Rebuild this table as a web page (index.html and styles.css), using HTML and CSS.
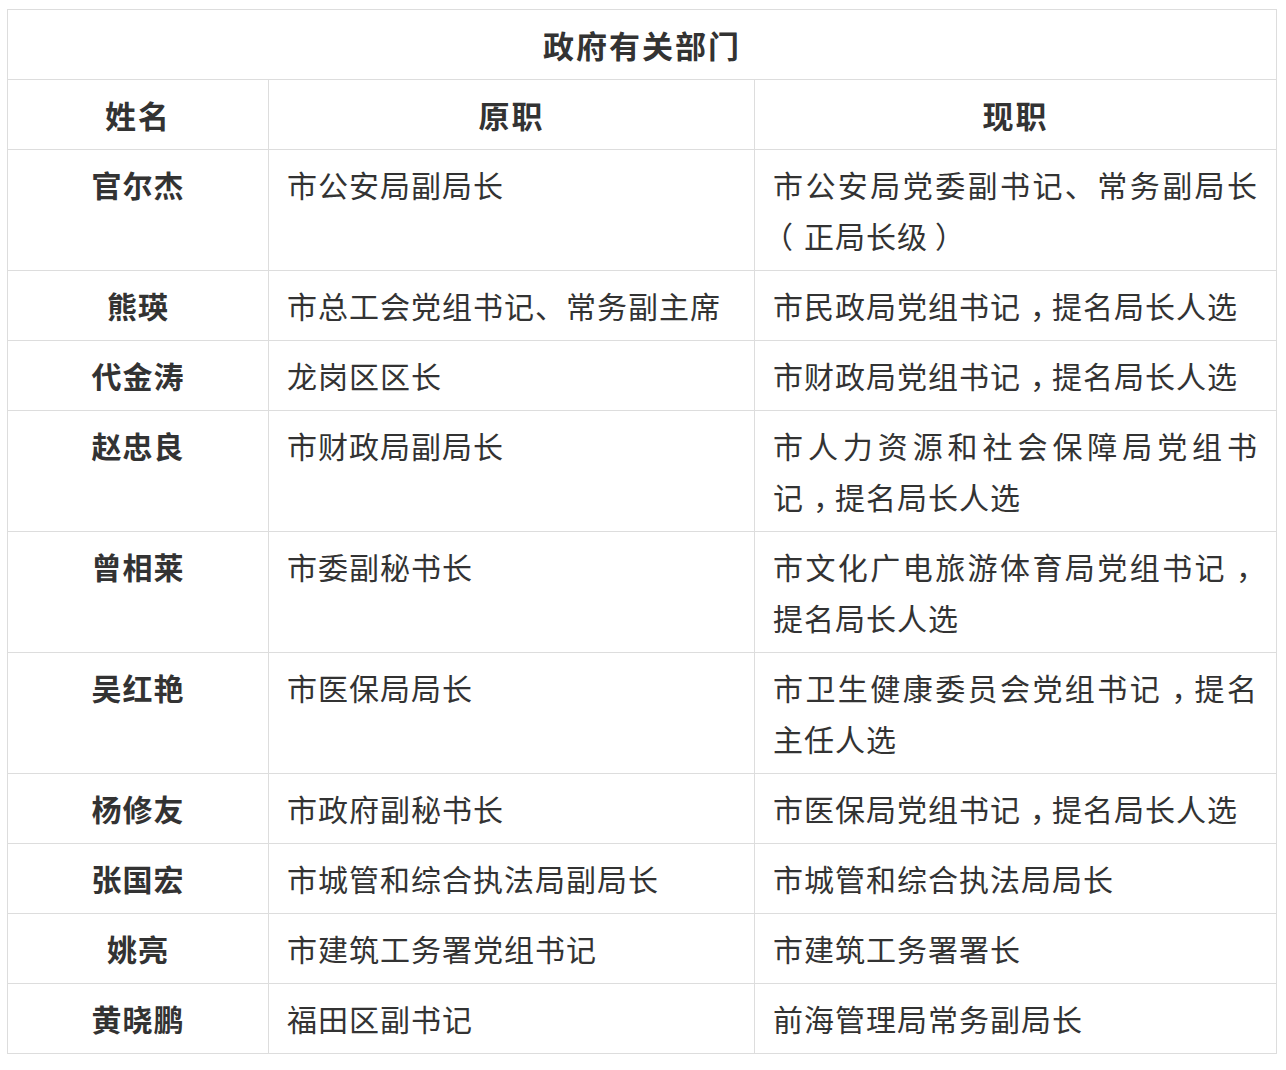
FILE: index.html
```html
<!DOCTYPE html>
<html lang="zh-CN">
<head>
<meta charset="utf-8">
<title>政府有关部门</title>
<link rel="stylesheet" href="styles.css">
</head>
<body>
<div class="wrap">
<table class="tbl">
  <colgroup><col class="c1"><col class="c2"><col class="c3"></colgroup>
  <tr><th class="title" colspan="3">政府有关部门</th></tr>
  <tr class="head"><th>姓名</th><th>原职</th><th>现职</th></tr>
  <tr><td class="name">官尔杰</td><td>市公安局副局长</td><td>市公安局党委副书记、常务副局长<span class="po">（</span>正局长级<span class="pc">）</span></td></tr>
  <tr><td class="name">熊瑛</td><td>市总工会党组书记、常务副主席</td><td>市民政局党组书记<span class="cm">，</span>提名局长人选</td></tr>
  <tr><td class="name">代金涛</td><td>龙岗区区长</td><td>市财政局党组书记<span class="cm">，</span>提名局长人选</td></tr>
  <tr><td class="name">赵忠良</td><td>市财政局副局长</td><td>市人力资源和社会保障局党组书记<span class="cm">，</span>提名局长人选</td></tr>
  <tr><td class="name">曾相莱</td><td>市委副秘书长</td><td>市文化广电旅游体育局党组书记<span class="cm">，</span>提名局长人选</td></tr>
  <tr><td class="name">吴红艳</td><td>市医保局局长</td><td>市卫生健康委员会党组书记<span class="cm">，</span>提名主任人选</td></tr>
  <tr><td class="name">杨修友</td><td>市政府副秘书长</td><td>市医保局党组书记<span class="cm">，</span>提名局长人选</td></tr>
  <tr><td class="name">张国宏</td><td>市城管和综合执法局副局长</td><td>市城管和综合执法局局长</td></tr>
  <tr><td class="name">姚亮</td><td>市建筑工务署党组书记</td><td>市建筑工务署署长</td></tr>
  <tr><td class="name">黄晓鹏</td><td>福田区副书记</td><td>前海管理局常务副局长</td></tr>
</table>
</div>
</body>
</html>
```
FILE: styles.css
```css
html, body {
  margin: 0;
  padding: 0;
  background: #fff;
}
.wrap {
  padding: 9px 0 0 7px;
}
.tbl {
  border-collapse: collapse;
  table-layout: fixed;
  width: 1269px;
  color: #333;
  font-family: "Noto Sans CJK SC", "Noto Sans", sans-serif;
  font-size: 30px;
  letter-spacing: 1px;
}
.c1 { width: 261px; }
.c2 { width: 486px; }
.c3 { width: 522px; }
.tbl th, .tbl td {
  border: 1px solid #dddddd;
  padding: 9px 18px;
  line-height: 51px;
  vertical-align: top;
  text-align: justify;
}
.tbl th {
  font-weight: bold;
  text-align: center;
  font-size: 31px;
  letter-spacing: 2px;
}
.tbl td.name {
  font-weight: bold;
  text-align: center;
}
.cm {
  padding-left: 9px;
  letter-spacing: -8px;
}
.po {
  margin-left: -10px;
  letter-spacing: 11px;
}
.pc {
  padding-left: 7px;
  letter-spacing: -6px;
}
```
